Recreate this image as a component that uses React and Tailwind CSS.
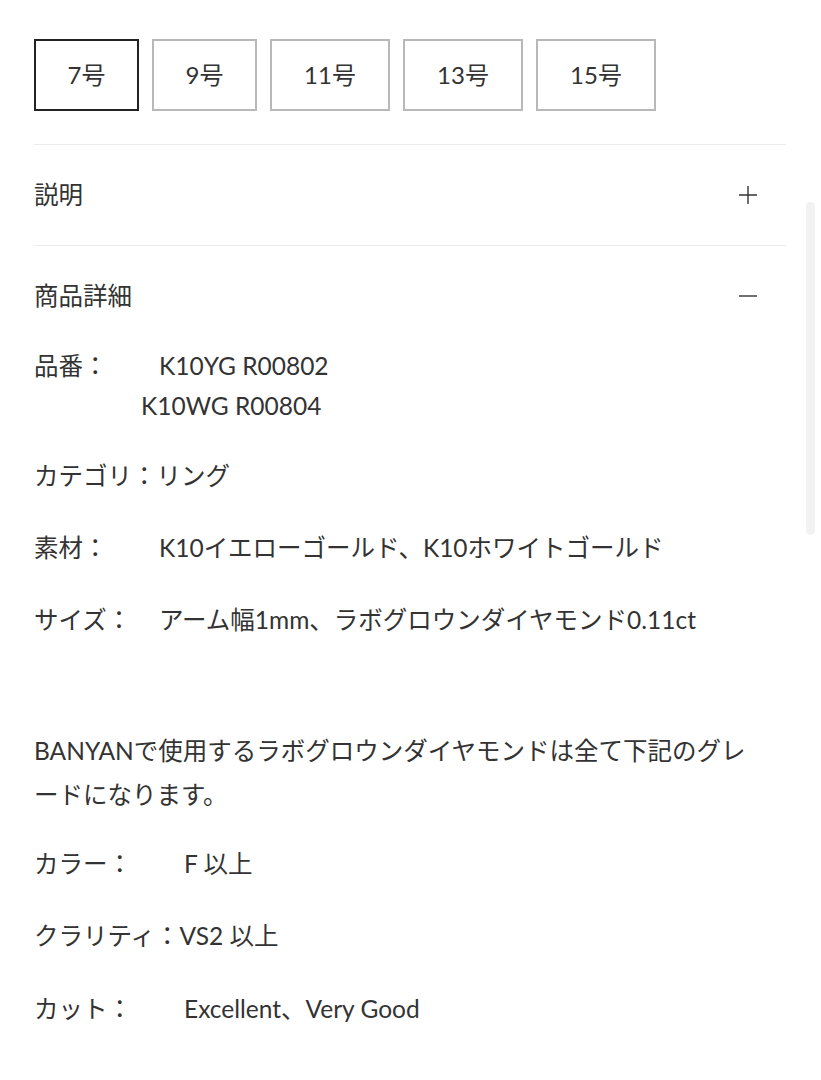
import React from "react";

const sizes = [
  { label: "7号", w: "w-[105px]", active: true },
  { label: "9号", w: "w-[105px]" },
  { label: "11号", w: "w-[120px]" },
  { label: "13号", w: "w-[120px]" },
  { label: "15号", w: "w-[120px]" },
];

function Plus() {
  return (
    <svg width="20" height="20" viewBox="0 0 20 20" className="text-[#333]">
      <path d="M10 1v18M1 10h18" stroke="currentColor" strokeWidth="1.4" fill="none" />
    </svg>
  );
}
function Minus() {
  return (
    <svg width="20" height="20" viewBox="0 0 20 20" className="text-[#333]">
      <path d="M1 10h18" stroke="currentColor" strokeWidth="1.4" fill="none" />
    </svg>
  );
}

export default function App() {
  return (
    <div
      className="relative w-[821px] h-[1080px] overflow-hidden bg-white text-[#333]"
      style={{ fontFamily: "Lato, 'Noto Sans CJK JP', sans-serif" }}
    >
      <div className="pl-[34px] pr-[35px]">
        <div className="flex gap-[13px] pt-[39px]">
          {sizes.map((s) => (
            <div
              key={s.label}
              className={`${s.w} h-[72px] flex items-center justify-center text-[24px] border-2 ${
                s.active ? "border-[#222]" : "border-[#b8b8b8]"
              }`}
            >
              {s.label}
            </div>
          ))}
        </div>

        <div className="mt-[33px] border-t border-[#ececec]" />
        <div className="h-[100px] flex items-center justify-between pr-[28px] text-[24.5px]">
          <span>説明</span>
          <Plus />
        </div>
        <div className="border-t border-[#ececec]" />
        <div className="h-[100px] flex items-center justify-between pr-[28px] text-[24.5px]">
          <span>商品詳細</span>
          <Minus />
        </div>

        <div className="text-[24.5px] leading-[40px]">
          <div className="flex">
            <span className="w-[125px] shrink-0">品番：</span>
            <span>K10YG R00802</span>
          </div>
          <div className="pl-[107px]">K10WG R00804</div>

          <div className="mt-[30px]">カテゴリ：リング</div>

          <div className="mt-[32px] flex">
            <span className="w-[125px] shrink-0">素材：</span>
            <span>K10イエローゴールド、K10ホワイトゴールド</span>
          </div>

          <div className="mt-[32px] flex">
            <span className="w-[125px] shrink-0">サイズ：</span>
            <span className="whitespace-nowrap">アーム幅1mm、ラボグロウンダイヤモンド0.11ct</span>
          </div>

          <p className="mt-[89px] leading-[44px] w-[730px]">
            BANYANで使用するラボグロウンダイヤモンドは全て下記のグレードになります。
          </p>

          <div className="mt-[27px] flex">
            <span className="w-[150px] shrink-0">カラー：</span>
            <span>F 以上</span>
          </div>

          <div className="mt-[32px]">クラリティ：VS2 以上</div>

          <div className="mt-[33px] flex">
            <span className="w-[150px] shrink-0">カット：</span>
            <span>Excellent、Very Good</span>
          </div>
        </div>
      </div>

      <div className="absolute left-[806px] top-[202px] w-[9px] h-[333px] rounded-full bg-[#f2f2f2]" />
    </div>
  );
}
